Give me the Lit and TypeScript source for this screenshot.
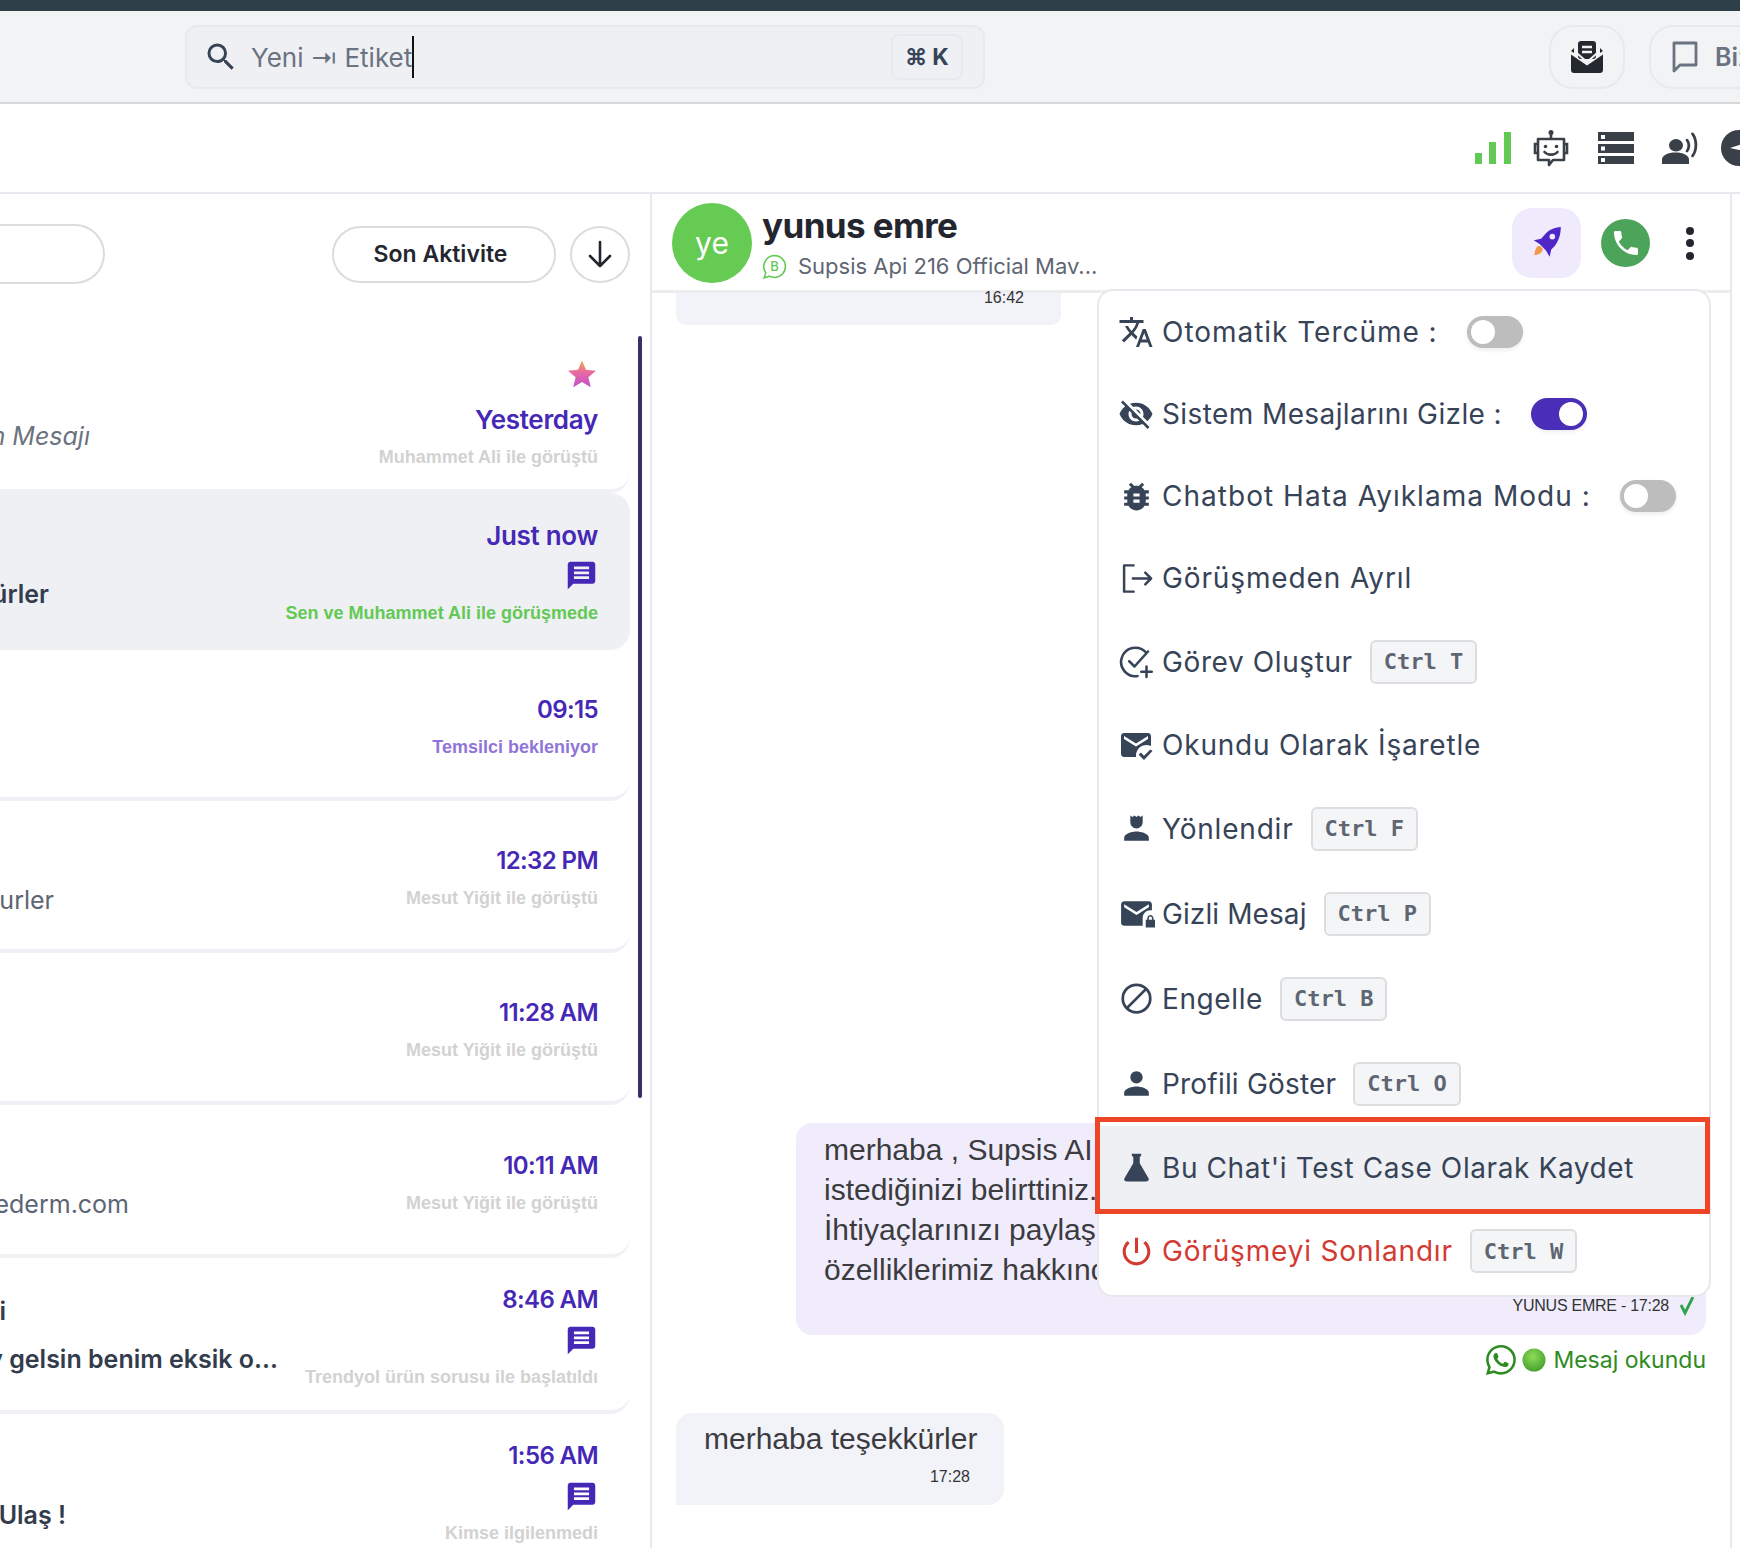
import { LitElement, html, css } from "lit";
import { customElement } from "lit/decorators.js";

const P = {
  search: "M15.5 14h-.79l-.28-.27A6.471 6.471 0 0 0 16 9.5 6.5 6.5 0 1 0 9.5 16c1.61 0 3.09-.59 4.23-1.57l.27.28v.79l5 4.99L20.49 19l-4.99-5zm-6 0C7.01 14 5 11.99 5 9.5S7.01 5 9.5 5 14 7.01 14 9.5 11.99 14 9.5 14z",
  translate: "M12.87 15.07l-2.54-2.51.03-.03c1.74-1.94 2.98-4.17 3.71-6.53H17V4h-7V2H8v2H1v1.99h11.17C11.5 7.92 10.44 9.75 9 11.35 8.07 10.32 7.3 9.19 6.69 8h-2c.73 1.63 1.73 3.17 2.98 4.56l-5.09 5.02L4 19l5-5 3.11 3.11.76-2.04zM18.5 10h-2L12 22h2l1.12-3h4.75L21 22h2l-4.5-12zm-2.62 7l1.62-4.33L19.12 17h-3.24z",
  eyeOff: "M12 7c2.76 0 5 2.24 5 5 0 .65-.13 1.26-.36 1.83l2.92 2.92c1.51-1.26 2.7-2.89 3.43-4.75-1.73-4.39-6-7.5-11-7.5-1.4 0-2.74.25-3.98.7l2.16 2.16C10.74 7.13 11.35 7 12 7zM2 4.27l2.28 2.28.46.46C3.08 8.3 1.78 10.02 1 12c1.73 4.39 6 7.5 11 7.5 1.55 0 3.03-.3 4.38-.84l.42.42L19.73 22 21 20.73 3.27 3 2 4.27zM7.53 9.8l1.55 1.55c-.05.21-.08.43-.08.65 0 1.66 1.34 3 3 3 .22 0 .44-.03.65-.08l1.55 1.55c-.67.33-1.41.53-2.2.53-2.76 0-5-2.24-5-5 0-.79.2-1.53.53-2.2zm4.31-.78l3.15 3.15.02-.16c0-1.66-1.34-3-3-3l-.17.01z",
  bug: "M20 8h-2.81c-.45-.78-1.07-1.45-1.82-1.96L17 4.41 15.59 3l-2.17 2.17C12.96 5.06 12.49 5 12 5c-.49 0-.96.06-1.41.17L8.41 3 7 4.41l1.62 1.63C7.88 6.55 7.26 7.22 6.81 8H4v2h2.09c-.05.33-.09.66-.09 1v1H4v2h2v1c0 .34.04.67.09 1H4v2h2.81c1.04 1.79 2.97 3 5.19 3s4.15-1.21 5.19-3H20v-2h-2.09c.05-.33.09-.66.09-1v-1h2v-2h-2v-1c0-.34-.04-.67-.09-1H20V8zm-6 8h-4v-2h4v2zm0-4h-4v-2h4v2z",
  mailRead: "M12 19c0-3.87 3.13-7 7-7 1.08 0 2.09.25 3 .68V6c0-1.1-.9-2-2-2H4c-1.1 0-2 .9-2 2v12c0 1.1.9 2 2 2h8.08c-.05-.33-.08-.66-.08-1zM4 6l8 5 8-5v2l-8 5-8-5V6zm13.34 16l-3.54-3.54 1.41-1.41 2.12 2.12 4.24-4.24L23 16l-5.66 6z",
  person: "M12 12c2.21 0 4-1.79 4-4s-1.79-4-4-4-4 1.79-4 4 1.79 4 4 4zm0 2c-2.67 0-8 1.34-8 4v2h16v-2c0-2.66-5.33-4-8-4z",
  forward: "M8 3.5l1.4 1 1.3-1 1.3 1 1.3-1 1.3 1L16 3.500V8c0 2.21-1.79 4-4 4s-4-1.79-4-4V3.500zM12 14c-2.67 0-8 1.34-8 4v2h16v-2c0-2.66-5.33-4-8-4z",
  mailLock: "M22 9.97V6c0-1.1-.9-2-2-2H4C2.900 4 2.010 4.900 2.010 6L2 18c0 1.100.9 2 2 2h12v-5.030c0-2.760 2.240-5 5-5h1zM20 8l-8 5-8-5V6l8 5 8-5v2zM23 16v-1c0-1.100-.9-2-2-2s-2 .9-2 2v1h-1v5h6v-5h-1zm-1 0h-2v-1c0-.55.45-1 1-1s1 .45 1 1v1z",
  flask: "M9 3h6v1.600l-.9.4v4.200l5.600 9.600c.7 1.200-.1 2.200-1.300 2.200H5.600c-1.200 0-2-1-1.300-2.200l5.600-9.600V5L9 4.600z",
  power: "M13 3h-2v10h2V3zm4.830 2.170l-1.420 1.420C17.990 7.860 19 9.810 19 12c0 3.870-3.130 7-7 7s-7-3.130-7-7c0-2.190 1.010-4.140 2.580-5.420L6.170 5.170C4.230 6.820 3 9.260 3 12c0 4.970 4.030 9 9 9s9-4.030 9-9c0-2.740-1.230-5.180-3.170-6.830z",
  phone: "M6.620 10.790c1.440 2.830 3.760 5.140 6.590 6.590l2.200-2.200c.27-.27.67-.36 1.020-.24 1.120.37 2.330.57 3.570.57.55 0 1 .45 1 1V20c0 .55-.45 1-1 1-9.390 0-17-7.610-17-17 0-.55.45-1 1-1h3.500c.55 0 1 .45 1 1 0 1.250.2 2.450.57 3.570.11.350.03.740-.25 1.020l-2.200 2.200z",
  bubble: "M4 2h16c1.100 0 2 .9 2 2v12c0 1.100-.9 2-2 2H6l-4 4V4c0-1.100.9-2 2-2zm2.500 3.500v2h11v-2zm0 3.500v2h11V9zm0 3.500v2h11v-2z",
  whatsapp: "M13.601 2.326A7.854 7.854 0 0 0 7.994 0C3.627 0 .068 3.558.064 7.926c0 1.399.366 2.76 1.057 3.965L0 16l4.204-1.102a7.933 7.933 0 0 0 3.790.965h.004c4.368 0 7.926-3.558 7.930-7.930A7.898 7.898 0 0 0 13.600 2.326zM7.994 14.521a6.573 6.573 0 0 1-3.356-.920l-.24-.144-2.494.654.666-2.433-.156-.251a6.560 6.560 0 0 1-1.007-3.505c0-3.626 2.957-6.584 6.591-6.584a6.560 6.560 0 0 1 4.660 1.931 6.557 6.557 0 0 1 1.928 4.660c-.004 3.639-2.961 6.592-6.592 6.592zm3.615-4.934c-.197-.099-1.170-.578-1.353-.646-.182-.065-.315-.099-.445.099-.133.197-.513.646-.627.775-.114.133-.232.148-.43.050-.197-.1-.836-.308-1.592-.985-.59-.525-.985-1.175-1.103-1.372-.114-.198-.011-.304.088-.403.087-.088.197-.232.296-.346.1-.114.133-.198.198-.33.065-.134.034-.248-.015-.347-.05-.099-.445-1.076-.612-1.470-.16-.389-.323-.335-.445-.34-.114-.007-.247-.007-.38-.007a.729.729 0 0 0-.529.247c-.182.198-.691.677-.691 1.654 0 .977.71 1.916.81 2.049.098.133 1.394 2.132 3.383 2.992.47.205.84.326 1.129.418.475.152.904.129 1.246.08.38-.058 1.171-.48 1.338-.943.164-.464.164-.86.114-.943-.049-.084-.182-.133-.38-.232z",
};
const ic = (d: string, size = 30, box = 24) => html`<svg width=${size} height=${size} viewBox="0 0 ${box} ${box}" fill="currentColor"><path d=${d}></path></svg>`;

const logout = html`<svg width="35" height="35" viewBox="0 0 24 24" fill="none" stroke="currentColor" stroke-width="1.700" stroke-linecap="round" stroke-linejoin="round"><path d="M10 3H3.500v18H10M9.500 12H22M18 8l4 4-4 4"></path></svg>`;
const taskAdd = html`<svg width="36" height="36" viewBox="0 0 24 24" fill="none" stroke="currentColor" stroke-width="1.700" stroke-linecap="round" stroke-linejoin="round"><path d="M18.500 5.500A9.500 9.500 0 1 0 13 21.400M7.500 11.500l3.500 3.500 9-10M19 15v7M15.500 18.500h7"></path></svg>`;
const block = html`<svg width="33" height="33" viewBox="0 0 24 24" fill="none" stroke="currentColor" stroke-width="2"><circle cx="12" cy="12" r="10"></circle><path d="M5 19L19 5"></path></svg>`;

const mailOpen = html`<svg width="34" height="32" viewBox="0 0 34 32" fill="#24282f"><rect x="8" y="0" width="18" height="18" rx="3"></rect><path d="M1 10l3-3v5zM33 10l-3-3v5z"></path><path d="M1 13.500l16 11 16-11V29c0 1.700-1.300 3-3 3H4c-1.700 0-3-1.300-3-3z"></path><path d="M12 6h10M12 11h10" stroke="#f2f3f5" stroke-width="2.400"></path><path d="M5 10.500L17 21l12-10.500" fill="none" stroke="#f2f3f5" stroke-width="2"></path></svg>`;
const chatOutline = html`<svg width="28" height="34" viewBox="0 0 28 34" fill="none" stroke="#6b7280" stroke-width="2.800" stroke-linejoin="round"><path d="M3 3h22v22H9l-6 6z"></path></svg>`;
const bars = html`<svg width="36" height="32" viewBox="0 0 36 32" fill="#62c954"><rect x="0" y="21" width="7" height="11"></rect><rect x="14" y="10" width="7" height="22"></rect><rect x="29" y="0" width="7" height="32"></rect></svg>`;
const bot = html`<svg width="36" height="38" viewBox="0 0 36 38" fill="none" stroke="#3a4048" stroke-width="2.600"><path d="M18 3v7"></path><circle cx="18" cy="3.500" r="2.500" fill="#3a4048" stroke="none"></circle><path d="M5 10h26v21H20l-4 5v-5H5z" stroke-linejoin="round"></path><path d="M5 15H2v9h3M31 15h3v9h-3"></path><circle cx="12.500" cy="17.500" r="1.800" fill="#3a4048" stroke="none"></circle><circle cx="23.500" cy="17.500" r="1.800" fill="#3a4048" stroke="none"></circle><path d="M11.500 23c3 3.500 10 3.500 13 0" stroke-linecap="round"></path></svg>`;
const server = html`<svg width="36" height="32" viewBox="0 0 36 32" fill="#3a4048"><path fill-rule="evenodd" d="M0 0h36v9H0zM3 3v4h4V3zM0 12h36v9H0zM3 14.500v4h4v-4zM0 24h36v8H0zM3 26v4h4v-4z"></path></svg>`;
const voice = html`<svg width="36" height="32" viewBox="0 0 36 36" preserveAspectRatio="none" fill="none" stroke="#3a4048"><circle cx="14" cy="15" r="7" fill="#3a4048" stroke="none"></circle><path d="M0 36v-5c0-5 6-8 13.500-8S27 26 27 31v5z" fill="#3a4048" stroke="none"></path><path d="M25 9c2.500 3.500 2.500 9 0 12.500M30.500 2c4.500 7 4.500 18.500 0 25" stroke-width="2.800" stroke-linecap="round"></path></svg>`;
const plane = html`<svg width="36" height="36" viewBox="0 0 36 36"><circle cx="18" cy="18" r="18" fill="#3a4048"></circle><path d="M9 18l27-9v12l-18-1z" fill="#fff"></path></svg>`;
const rocket = html`<svg width="34" height="34" viewBox="0 0 32 32"><path d="M29 1c-6 .5-11 2.500-15 7l-3.500 4-7 1.500L9 17l6 6 3.500 6 1.500-7 3.500-3.500C27 14 29 8 29 1z" fill="#4f27c6"></path><circle cx="21" cy="10" r="2.600" fill="#efebfc"></circle><path d="M7 19c2.500-1 5 1.500 5 3.500-1 3-4.500 4.500-8 5 .5-3.500 1-6.500 3-8.500z" fill="#f2994a"></path></svg>`;
const bizIcon = html`<svg width="25" height="25" viewBox="0 0 24 24" fill="none" stroke="#62c954" stroke-width="1.500"><path d="M12 1.500a10.500 10.500 0 0 1 0 21c-1.800 0-3.400-.4-4.800-1.200L2 23l1.600-5A10.500 10.500 0 0 1 12 1.500z"></path><text x="12" y="16.500" text-anchor="middle" font-size="12.500" font-family="Inter, sans-serif" font-weight="500" fill="#62c954" stroke="none">B</text></svg>`;
const starIc = html`<svg width="30" height="30" viewBox="0 0 30 30"><defs><linearGradient id="sg" x1="0" y1="0" x2="0" y2="1"><stop offset="0" stop-color="#f0a94a"></stop><stop offset=".45" stop-color="#e86ba0"></stop><stop offset="1" stop-color="#c04fd0"></stop></linearGradient></defs><path d="M15 1.500l4 9.300 10 .9-7.600 6.600 2.300 9.900L15 23l-8.700 5.200 2.300-9.900L1 11.700l10-.9z" fill="url(#sg)"></path></svg>`;
const dot = html`<svg width="24" height="24" viewBox="0 0 24 24"><defs><radialGradient id="dg" cx=".45" cy=".35" r=".7"><stop offset="0" stop-color="#8fdc5a"></stop><stop offset="1" stop-color="#3f9e2a"></stop></radialGradient></defs><circle cx="12" cy="12" r="11.500" fill="url(#dg)"></circle></svg>`;
const tick = html`<svg width="16" height="20" viewBox="0 0 16 20" fill="none" stroke="#2fa14a" stroke-width="2.800"><path d="M2 9l4 8 8-16"></path></svg>`;

type Row = { h: number; w: number; time: string; word?: boolean; sub: string; subCls?: string; name?: string; nw?: number; msg?: string; cls?: string; star?: boolean; chat?: boolean; sel?: boolean };
const rows: Row[] = [
  { h: 160, w: 90, time: "Yesterday", word: true, sub: "Muhammet Ali ile görüştü", msg: "Sistem Mesajı", cls: "it", star: true },
  { h: 157, w: 49, time: "Just now", word: true, sub: "Sen ve Muhammet Ali ile görüşmede", subCls: "g", msg: "teşekkürler", cls: "b", chat: true, sel: true },
  { h: 151, w: 49, time: "09:15", sub: "Temsilci bekleniyor", subCls: "p" },
  { h: 152, w: 54, time: "12:32 PM", sub: "Mesut Yiğit ile görüştü", msg: "teşekkurler" },
  { h: 152, w: 54, time: "11:28 AM", sub: "Mesut Yiğit ile görüştü" },
  { h: 153, w: 129, time: "10:11 AM", sub: "Mesut Yiğit ile görüştü", msg: "info@sedederm.com" },
  { h: 156, w: 278, time: "8:46 AM", sub: "Trendyol ürün sorusu ile başlatıldı", name: "Ali", nw: 6, msg: "kolay gelsin benim eksik o...", cls: "b", chat: true },
  { h: 156, w: 66, time: "1:56 AM", sub: "Kimse ilgilenmedi", msg: "Merhaba Ulaş !", cls: "b", chat: true },
];

type Item = { icon: unknown; label: string; ls: number; toggle?: "on" | "off"; kbd?: string; red?: boolean; mark?: boolean };
const items: Item[] = [
  { icon: ic(P.translate, 36), label: "Otomatik Tercüme :", ls: 0.97, toggle: "off" },
  { icon: ic(P.eyeOff, 36), label: "Sistem Mesajlarını Gizle :", ls: 0.4, toggle: "on" },
  { icon: ic(P.bug, 37), label: "Chatbot Hata Ayıklama Modu :", ls: 1.03, toggle: "off" },
  { icon: logout, label: "Görüşmeden Ayrıl", ls: 0.88 },
  { icon: taskAdd, label: "Görev Oluştur", ls: 0.6, kbd: "Ctrl T" },
  { icon: ic(P.mailRead, 36), label: "Okundu Olarak İşaretle", ls: 0.8 },
  { icon: ic(P.forward, 37), label: "Yönlendir", ls: 0.8, kbd: "Ctrl F" },
  { icon: ic(P.mailLock, 37), label: "Gizli Mesaj", ls: 0.1, kbd: "Ctrl P" },
  { icon: block, label: "Engelle", ls: 0.6, kbd: "Ctrl B" },
  { icon: ic(P.person, 37), label: "Profili Göster", ls: 0.2, kbd: "Ctrl O" },
  { icon: ic(P.flask, 37), label: "Bu Chat'i Test Case Olarak Kaydet", ls: 0.6, mark: true },
  { icon: ic(P.power, 37), label: "Görüşmeyi Sonlandır", ls: 0.83, kbd: "Ctrl W", red: true },
];

@customElement("app-root")
export class AppRoot extends LitElement {
  static styles = css`
    :host { display: block; width: 1740px; height: 1548px; overflow: hidden; background: #fff; font-family: Inter, "Liberation Sans", sans-serif; color: #374357; }
    * { box-sizing: border-box; }
    svg { flex: none; display: block; }
    .top { height: 11px; background: #2e3f4a; }
    .header { height: 93px; background: #f2f3f5; border-bottom: 2px solid #d8d8d8; display: flex; align-items: flex-start; padding: 14px 0 0 185px; }
    .search { width: 800px; height: 64px; flex: none; border: 2px solid #e8e9ee; border-radius: 12px; background: #eff0f4; display: flex; align-items: center; padding: 0 20px 0 16px; }
    .search .mag { color: #374357; display: flex; margin-right: 12px; }
    .search .ph { font-size: 26px; color: #6b7280; }
    .caret { width: 2px; height: 42px; background: #111; }
    .cmd { margin-left: auto; width: 72px; height: 46px; border: 2px solid #e8e9ee; border-radius: 8px; display: flex; align-items: center; justify-content: center; gap: 5px; font-size: 23px; font-weight: 700; color: #374357; }
    .ibtn { margin-left: auto; flex: none; width: 76px; height: 64px; border: 2px solid #e8e9ee; border-radius: 24px; display: flex; align-items: center; justify-content: center; }
    .biz { flex: none; margin-left: 24px; width: 200px; height: 64px; border: 2px solid #e8e9ee; border-radius: 24px; display: flex; align-items: center; padding-left: 20px; gap: 16px; font-size: 25px; font-weight: 600; color: #6b7280; white-space: nowrap; margin-right: -109px; }
    .tools { height: 90px; border-bottom: 2px solid #e8e8ee; display: flex; align-items: center; padding-left: 1475px; overflow: hidden; }
    .tools .bot { margin-left: 22px; }
    .tools .srv { margin-left: 29px; }
    .tools .vo { margin-left: 28px; }
    .tools .pl { margin-left: 23px; flex: none; }
    .main { display: flex; height: 1354px; }
    .left { width: 652px; flex: none; border-right: 2px solid #e8e8ee; position: relative; overflow: hidden; }
    .filters { height: 139px; display: flex; align-items: center; padding: 0 20px 19px 0; }
    .fl { width: 105px; height: 60px; border: 2.500px solid #dcdcdc; border-left: none; border-radius: 0 30px 30px 0; }
    .sort { margin-left: auto; width: 224px; height: 57px; border: 2.500px solid #dcdcdc; border-radius: 29px; display: flex; align-items: center; justify-content: center; padding-right: 7px; font-size: 23px; font-weight: 600; color: #23262e; }
    .down { margin-left: 14px; width: 60px; height: 57px; border: 2.500px solid #dcdcdc; border-radius: 50%; display: flex; align-items: center; justify-content: center; }
    .list { width: 630px; }
    .row { display: flex; justify-content: space-between; align-items: center; padding: 6px 32px 0 0; border-bottom: 4px solid #f0f1f4; border-radius: 0 0 20px 0; }
    .row.sel { background: #eff0f4; border-bottom: none; border-radius: 0 20px 20px 0; padding-top: 2px; }
    .lc { flex: none; display: flex; flex-direction: column; gap: 18px; align-items: flex-end; margin-bottom: 5px; }
    .ln { height: 30px; line-height: 30px; font-size: 25px; white-space: nowrap; color: #5c6573; display: flex; justify-content: flex-end; width: 100%; }
    .ln.b { color: #333c4d; font-weight: 600; }
    .ln.it { font-style: italic; color: #6b7280; }
    .ln.nm { align-self: flex-start; }
    .rc { display: flex; flex-direction: column; align-items: flex-end; gap: 10px; }
    .star { height: 30px; margin-bottom: 6px; margin-right: 1px; }
    .time { height: 30px; line-height: 30px; font-size: 24px; font-weight: 600; color: #4528b5; white-space: nowrap; letter-spacing: -.6px; }
    .time.word { font-size: 26px; letter-spacing: -.3px; }
    .chatic { height: 30px; color: #4528b5; display: flex; align-items: center; }
    .sub { height: 24px; line-height: 24px; font-family: "Liberation Sans", Arial, sans-serif; font-weight: 700; font-size: 18px; color: #d2d2d2; white-space: nowrap; }
    .sub.g { color: #62c954; }
    .sub.p { color: #9075d8; }
    .scroll { position: absolute; left: 638px; top: 142px; width: 4px; height: 762px; background: #3b2e6e; border-radius: 3px; }

    .chat { width: 1080px; flex: none; border-right: 2px solid #e8e8ee; position: relative; }
    .chead { height: 99px; border-bottom: 3px solid #eceded; display: flex; align-items: center; padding: 2px 0 0 20px; }
    .avatar { width: 80px; height: 80px; flex: none; border-radius: 50%; background: #66cb52; color: #fff; font-size: 30px; display: flex; align-items: center; justify-content: center; }
    .who { margin-left: 10px; display: flex; flex-direction: column; gap: 8px; }
    .name { font-size: 35px; line-height: 38px; font-weight: 700; color: #23262e; letter-spacing: -.6px; }
    .acc { display: flex; align-items: center; gap: 11px; font-size: 22px; line-height: 28px; color: #5f6673; }
    .rocket { margin-left: auto; width: 69px; height: 70px; border-radius: 20px; background: #efebfc; display: flex; align-items: center; justify-content: center; }
    .call { margin-left: 20px; width: 49px; height: 48px; border-radius: 50%; background: #4ca35a; color: #fff; display: flex; align-items: center; justify-content: center; }
    .kebab { margin: 0 35px 0 36px; width: 9px; display: flex; flex-direction: column; gap: 4.500px; }
    .kebab i { display: block; width: 8px; height: 8px; border-radius: 50%; background: #23262e; }
    .msgs { display: flex; flex-direction: column; }
    .old { margin-left: 24px; width: 385px; height: 32px; background: #f2f3f8; border-radius: 0 0 10px 10px; font-family: "Liberation Sans", Arial, sans-serif; font-size: 16px; color: #333; text-align: right; padding-right: 37px; line-height: 10px; }
    .out { margin: 798px 24px 0 auto; width: 910px; height: 212px; background: #f0ecfc; border-radius: 16px; padding: 7px 11px 0 28px; font-family: "Liberation Sans", Arial, sans-serif; font-size: 30px; line-height: 40px; color: #3b3b40; }
    .out .t { height: 160px; white-space: nowrap; }
    .om { margin-top: 4px; display: flex; justify-content: flex-end; align-items: center; gap: 10px; font-size: 16px; letter-spacing: -.25px; line-height: 24px; color: #333; }
    .read { margin: 7px 24px 0 auto; display: flex; align-items: center; height: 36px; gap: 7px; color: #2e8b22; font-size: 23px; }
    .read .wa { display: flex; color: #2e8b22; margin-right: -1px; }
    .in { margin: 35px 0 0 24px; width: 328px; height: 92px; background: #f2f3f8; border-radius: 16px 16px 16px 0; font-family: "Liberation Sans", Arial, sans-serif; font-size: 30px; line-height: 40px; color: #3b3b40; padding: 6px 24px 0 28px; white-space: nowrap; }
    .in .m { font-size: 16px; line-height: 20px; color: #333; text-align: right; padding-top: 8px; padding-right: 10px; }

    .menu { position: absolute; left: 445px; top: 95px; width: 614px; height: 1008px; background: #fff; border: 2px solid #e8e8ee; border-radius: 16px; }
    .item { display: flex; align-items: center; padding-left: 22px; height: 82px; font-size: 28px; color: #374357; white-space: nowrap; position: relative; }
    .item.k { height: 85px; }
    .item.red { color: #d33a32; height: 84px; }
    .item.mark { height: 83px; background: #eff0f4; }
    .box { position: absolute; left: -4px; right: -1px; top: -9px; bottom: -5px; border: 5px solid #ee4428; pointer-events: none; }
    .ico { width: 30px; display: flex; justify-content: center; margin-right: 11px; flex: none; }
    .tg { margin-left: 29px; width: 56px; height: 32px; border-radius: 16px; background: #bdbdbd; position: relative; box-shadow: 0 2px 4px rgba(0,0,0,.08); }
    .tg::after { content: ""; position: absolute; left: 4px; top: 4px; width: 24px; height: 24px; border-radius: 50%; background: #fff; }
    .tg.on { background: #4a2eb8; }
    .tg.on::after { left: 28px; }
    .kbd { margin-left: 17px; height: 44px; padding: 0 12px; border: 2px solid #dcdde0; border-radius: 6px; background: #f4f5f7; color: #5f6673; font-family: "DejaVu Sans Mono", "Liberation Mono", monospace; font-weight: 700; font-size: 22px; display: flex; align-items: center; white-space: pre; }
  `;

  render() {
    return html`
      <div class="top"></div>
      <div class="header">
        <div class="search">
          <span class="mag">${ic(P.search, 36)}</span>
          <span class="ph">Yeni ⇥ Etiket</span><span class="caret"></span>
          <span class="cmd"><span>⌘</span><span>K</span></span>
        </div>
        <div class="ibtn">${mailOpen}</div>
        <div class="biz">${chatOutline}<span>Bize Yazın</span></div>
      </div>
      <div class="tools">${bars}<span class="bot">${bot}</span><span class="srv">${server}</span><span class="vo">${voice}</span><span class="pl">${plane}</span></div>
      <div class="main">
        <div class="left">
          <div class="filters">
            <div class="fl"></div>
            <div class="sort">Son Aktivite</div>
            <div class="down"><svg width="28" height="30" viewBox="0 0 28 30" fill="none" stroke="#23262e" stroke-width="2.600" stroke-linecap="round" stroke-linejoin="round"><path d="M14 3v24M4 17l10 10 10-10"></path></svg></div>
          </div>
          <div class="list">${rows.map((r) => this.row(r))}</div>
          <div class="scroll"></div>
        </div>
        <div class="chat">
          <div class="chead">
            <div class="avatar">ye</div>
            <div class="who">
              <div class="name">yunus emre</div>
              <div class="acc">${bizIcon}<span>Supsis Api 216 Official Mav...</span></div>
            </div>
            <div class="rocket">${rocket}</div>
            <div class="call">${ic(P.phone, 32)}</div>
            <div class="kebab"><i></i><i></i><i></i></div>
          </div>
          <div class="msgs">
            <div class="old">16:42</div>
            <div class="out">
              <div class="t">merhaba , Supsis AI<br />istediğinizi belirttiniz.<br />İhtiyaçlarınızı paylaşın<br />özelliklerimiz hakkında</div>
              <div class="om"><span>YUNUS EMRE - 17:28</span>${tick}</div>
            </div>
            <div class="read"><span class="wa">${ic(P.whatsapp, 30, 16)}</span>${dot}<span>Mesaj okundu</span></div>
            <div class="in">merhaba teşekkürler<div class="m">17:28</div></div>
          </div>
          <div class="menu">${items.map((i) => this.item(i))}</div>
        </div>
      </div>
    `;
  }

  row(r: Row) {
    return html`<div class="row ${r.sel ? "sel" : ""}" style="height:${r.h}px">
      <div class="lc" style="width:${r.w}px">
        <div class="ln nm ${r.cls === "b" ? "b" : ""}" style=${r.nw ? `width:${r.nw}px` : ""}>${r.name ?? ""}</div>
        <div class="ln ${r.cls ?? ""}">${r.msg ?? ""}</div>
      </div>
      <div class="rc">
        ${r.star ? html`<div class="star">${starIc}</div>` : ""}
        <div class="time ${r.word ? "word" : ""}">${r.time}</div>
        ${r.chat ? html`<div class="chatic">${ic(P.bubble, 33)}</div>` : ""}
        <div class="sub ${r.subCls ?? ""}">${r.sub}</div>
      </div>
    </div>`;
  }

  item(i: Item) {
    return html`<div class="item ${i.kbd ? "k" : ""} ${i.red ? "red" : ""} ${i.mark ? "mark" : ""}">
      <span class="ico">${i.icon}</span><span style="letter-spacing:${i.ls}px">${i.label}</span>
      ${i.toggle ? html`<span class="tg ${i.toggle === "on" ? "on" : ""}"></span>` : ""}
      ${i.kbd ? html`<span class="kbd">${i.kbd}</span>` : ""}
      ${i.mark ? html`<span class="box"></span>` : ""}
    </div>`;
  }
}
